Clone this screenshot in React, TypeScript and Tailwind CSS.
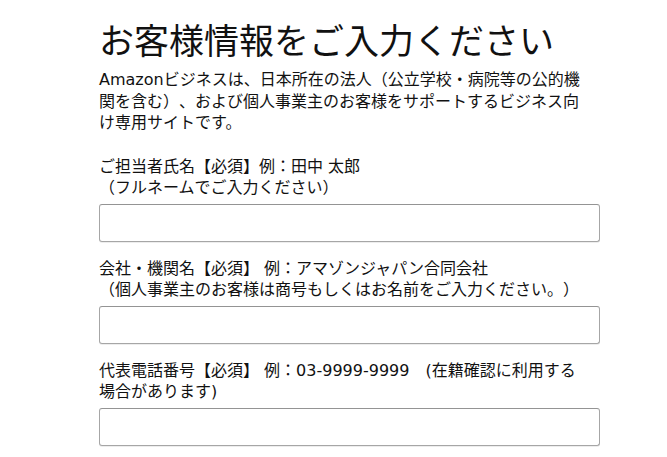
import React from "react";

const fields = [
  {
    id: "name",
    lines: ["ご担当者氏名【必須】例：田中 太郎", "（フルネームでご入力ください）"],
  },
  {
    id: "company",
    lines: [
      "会社・機関名【必須】 例：アマゾンジャパン合同会社",
      "（個人事業主のお客様は商号もしくはお名前をご入力ください。）",
    ],
  },
  {
    id: "phone",
    lines: ["代表電話番号【必須】 例：03-9999-9999　(在籍確認に利用する", "場合があります)"],
  },
];

export default function App() {
  return (
    <div
      className="min-h-screen bg-white text-[#111111] [text-spacing-trim:space-all]"
      style={{ fontFamily: '"DejaVu Sans", "Noto Sans CJK JP", sans-serif' }}
    >
      <div className="ml-[99px] w-[501px] pt-[21px]">
        <h1 className="text-[35px] leading-[42px] font-normal whitespace-nowrap">
          お客様情報をご入力ください
        </h1>
        <p className="mt-[6px] text-[16px] leading-[21.5px] whitespace-nowrap">
          Amazonビジネスは、日本所在の法人（公立学校・病院等の公的機
          <br />
          関を含む）、および個人事業主のお客様をサポートするビジネス向
          <br />
          け専用サイトです。
        </p>

        <form className="mt-[22px] flex flex-col">
          {fields.map((f) => (
            <div key={f.id} className="mb-[15.5px] flex flex-col">
              <label
                htmlFor={f.id}
                className="text-[16px] leading-[21.5px] whitespace-nowrap"
              >
                {f.lines[0]}
                <br />
                {f.lines[1]}
              </label>
              <input
                id={f.id}
                type="text"
                className="mt-[5.5px] h-[38px] w-full rounded-[3px] border border-[#a6a6a6] border-t-[#949494] bg-white px-2 shadow-[inset_0_1px_0_rgba(255,255,255,0.5),0_1px_0_rgba(0,0,0,0.07)] outline-none"
              />
            </div>
          ))}
        </form>
      </div>
    </div>
  );
}
